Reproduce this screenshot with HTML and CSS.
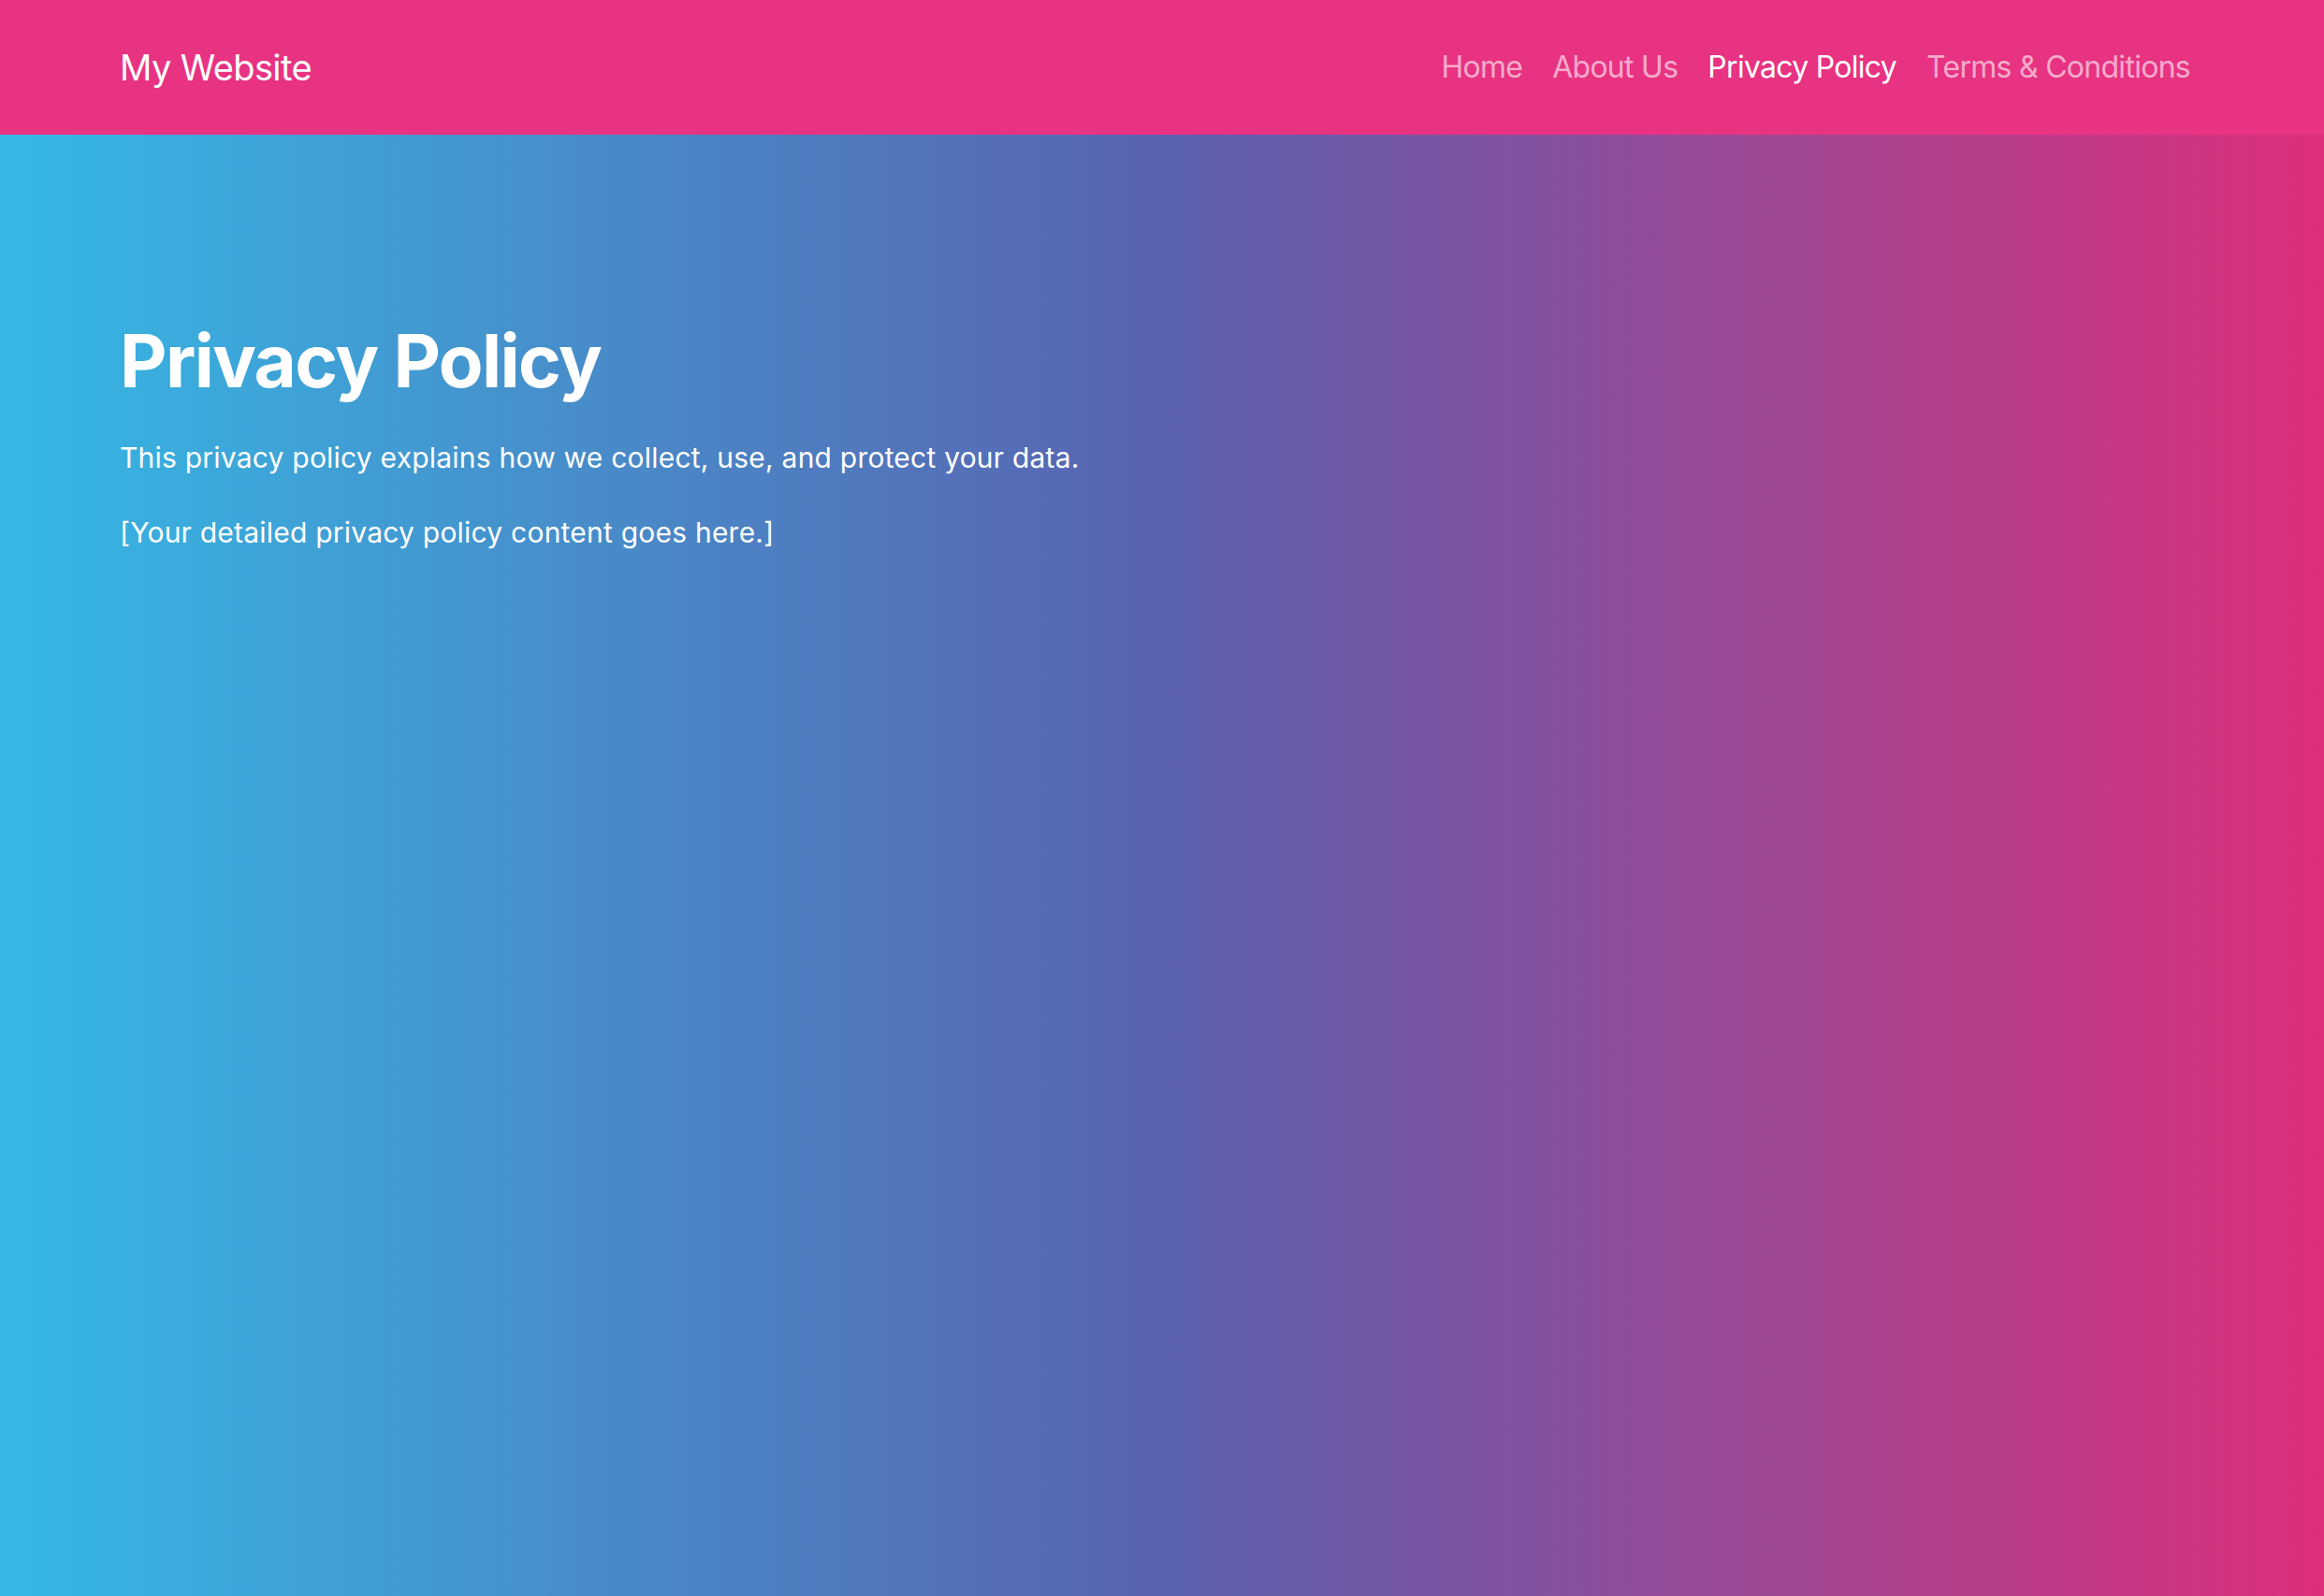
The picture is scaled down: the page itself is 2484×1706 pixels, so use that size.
FILE: index.html
```html
<!DOCTYPE html>
<html lang="en">
<head>
<meta charset="utf-8">
<title>Privacy Policy - My Website</title>
<link rel="stylesheet" href="styles.css">
</head>
<body>
<header class="navbar">
  <a class="brand" href="#">My Website</a>
  <nav class="nav">
    <a class="nav-link" href="#">Home</a>
    <a class="nav-link" href="#">About Us</a>
    <a class="nav-link active" href="#">Privacy Policy</a>
    <a class="nav-link" href="#">Terms &amp; Conditions</a>
  </nav>
</header>
<main class="content">
  <h1 class="title">Privacy Policy</h1>
  <p class="text">This privacy policy explains how we collect, use, and protect your data.</p>
  <p class="text">[Your detailed privacy policy content goes here.]</p>
</main>
</body>
</html>
```
FILE: styles.css
```css
html, body {
  margin: 0;
  padding: 0;
}
body {
  min-height: 100vh;
  font-family: Inter, "Noto Sans", "Liberation Sans", sans-serif;
  color: #ffffff;
  background: linear-gradient(90deg, #35b8e4 0%, #5a62b0 50%, #dd2f7b 100%);
}
.navbar {
  height: 144px;
  box-sizing: border-box;
  padding: 0 127px 0 128px;
  background: #e83282;
  display: flex;
  align-items: center;
  justify-content: space-between;
}
.brand {
  font-size: 38px;
  line-height: 48px;
  color: #ffffff;
  text-decoration: none;
  letter-spacing: -0.6px;
}
.nav {
  display: flex;
}
.nav-link {
  font-size: 32px;
  line-height: 38px;
  padding: 0 16px;
  color: rgba(255, 255, 255, 0.6);
  text-decoration: none;
  letter-spacing: -0.72px;
}
.nav-link.active {
  color: #ffffff;
}
.content {
  padding: 195px 128px 0;
}
.title {
  margin: 0 0 34px;
  font-size: 78px;
  line-height: 94px;
  font-weight: 700;
  letter-spacing: -1.6px;
}
.text {
  margin: 0 0 35px;
  font-size: 30px;
  line-height: 45px;
  letter-spacing: 0.22px;
}
```
